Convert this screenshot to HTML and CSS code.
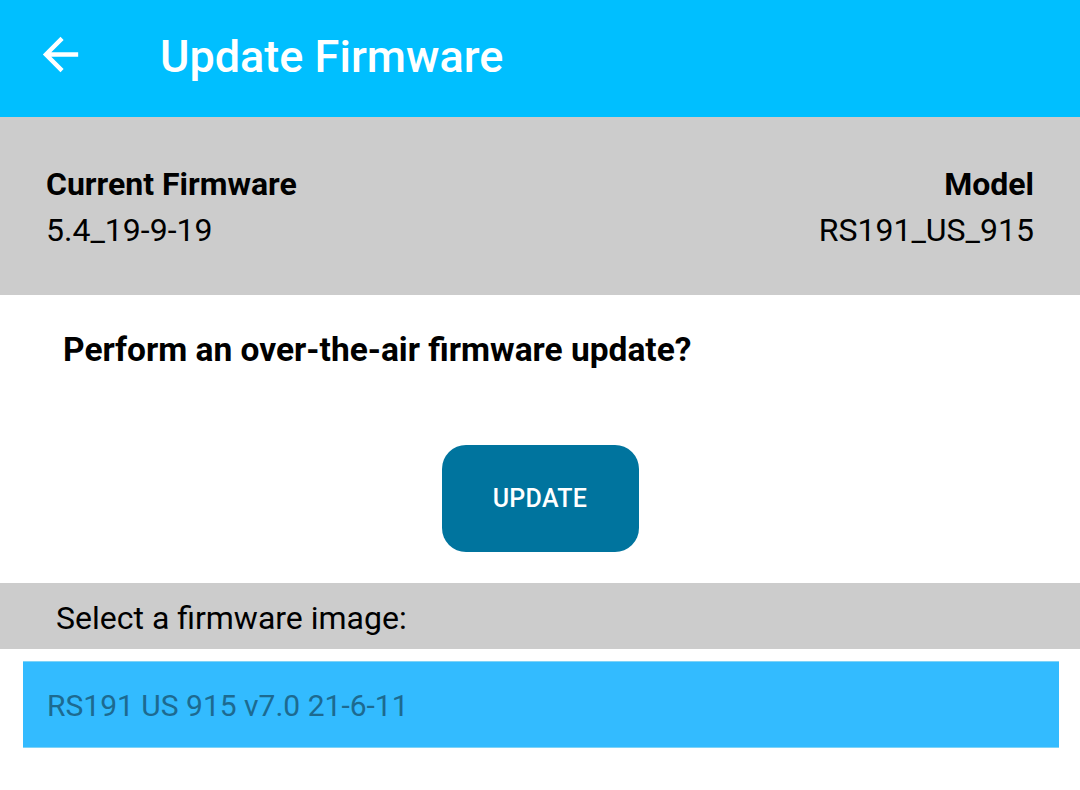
FILE: index.html
```html
<!DOCTYPE html>
<html lang="en">
<head>
    <meta charset="UTF-8">
    <meta name="viewport" content="width=device-width, initial-scale=1.0">
    <title>Update Firmware</title>
    <link rel="stylesheet" href="styles.css">
</head>
<body>

<!-- Toolbar -->
<header class="toolbar">
    <svg class="back-icon" viewBox="0 0 24 24" aria-hidden="true">
        <path d="M20 11H7.83l5.59-5.59L12 4l-8 8 8 8 1.41-1.41L7.83 13H20v-2z" fill="#fff"/>
    </svg>
    <h1 class="toolbar-title">Update Firmware</h1>
</header>

<!-- Current device info -->
<div class="device-info">
    <div class="info-col">
        <div class="info-label">Current Firmware</div>
        <div class="info-value">5.4_19-9-19</div>
    </div>
    <div class="info-col info-right">
        <div class="info-label">Model</div>
        <div class="info-value">RS191_US_915</div>
    </div>
</div>

<!-- Update prompt -->
<div class="prompt">
    <p class="prompt-text">Perform an over-the-air firmware update?</p>
    <div class="btn-row">
        <button class="update-btn">UPDATE</button>
    </div>
</div>

<!-- Firmware list -->
<div class="list-header">Select a firmware image:</div>
<ul class="fw-list">
    <li class="fw-item selected">RS191 US 915 v7.0 21-6-11</li>
</ul>

</body>
</html>
```

FILE: styles.css
```css
/* Basis */
body {
    margin: 0;
    padding: 0;
    font-family: Roboto, "Noto Sans", sans-serif;
    background-color: #fff;
    color: #000;
}

/* Toolbar */
.toolbar {
    height: 117px;
    background-color: #00bfff;
    display: flex;
    align-items: center;
    padding-left: 34px;
}

.back-icon {
    width: 53px;
    height: 53px;
    margin-right: 73px;
    margin-top: -8px;
}

.toolbar-title {
    margin: 0;
    color: #fff;
    font-size: 45px;
    font-weight: 500;
    margin-top: -4px;
}

/* Device info */
.device-info {
    height: 178px;
    box-sizing: border-box;
    background-color: #ccc;
    padding: 44px 46px 0 46px;
    display: flex;
    justify-content: space-between;
}

.info-right {
    text-align: right;
}

.info-label,
.info-value {
    font-size: 32px;
    line-height: 46px;
}

.info-label {
    font-weight: 700;
}

/* Update prompt */
.prompt {
    height: 288px;
    box-sizing: border-box;
    padding-top: 32px;
}

.prompt-text {
    margin: 0;
    padding-left: 63px;
    font-size: 33.5px;
    line-height: 46px;
    font-weight: 700;
}

.btn-row {
    display: flex;
    justify-content: center;
    margin-top: 72px;
}

.update-btn {
    width: 197px;
    height: 107px;
    border: none;
    border-radius: 24px;
    background-color: #00749e;
    color: #fff;
    font-family: Roboto, sans-serif;
    font-size: 25px;
    font-weight: 500;
    letter-spacing: 0.3px;
}

/* Firmware list */
.list-header {
    height: 66px;
    line-height: 70px;
    background-color: #ccc;
    padding-left: 56px;
    font-size: 32px;
}

.fw-list {
    list-style: none;
    margin: 12px 21px 0 23px;
    padding: 0;
}

.fw-item {
    height: 85px;
    line-height: 88px;
    padding-left: 24px;
    font-size: 30px;
    color: #1d6a90;
    background-color: #33bbff;
    border-top: 1px solid #7fd3f7;
    border-bottom: 1px solid #7fd3f7;
}
```
